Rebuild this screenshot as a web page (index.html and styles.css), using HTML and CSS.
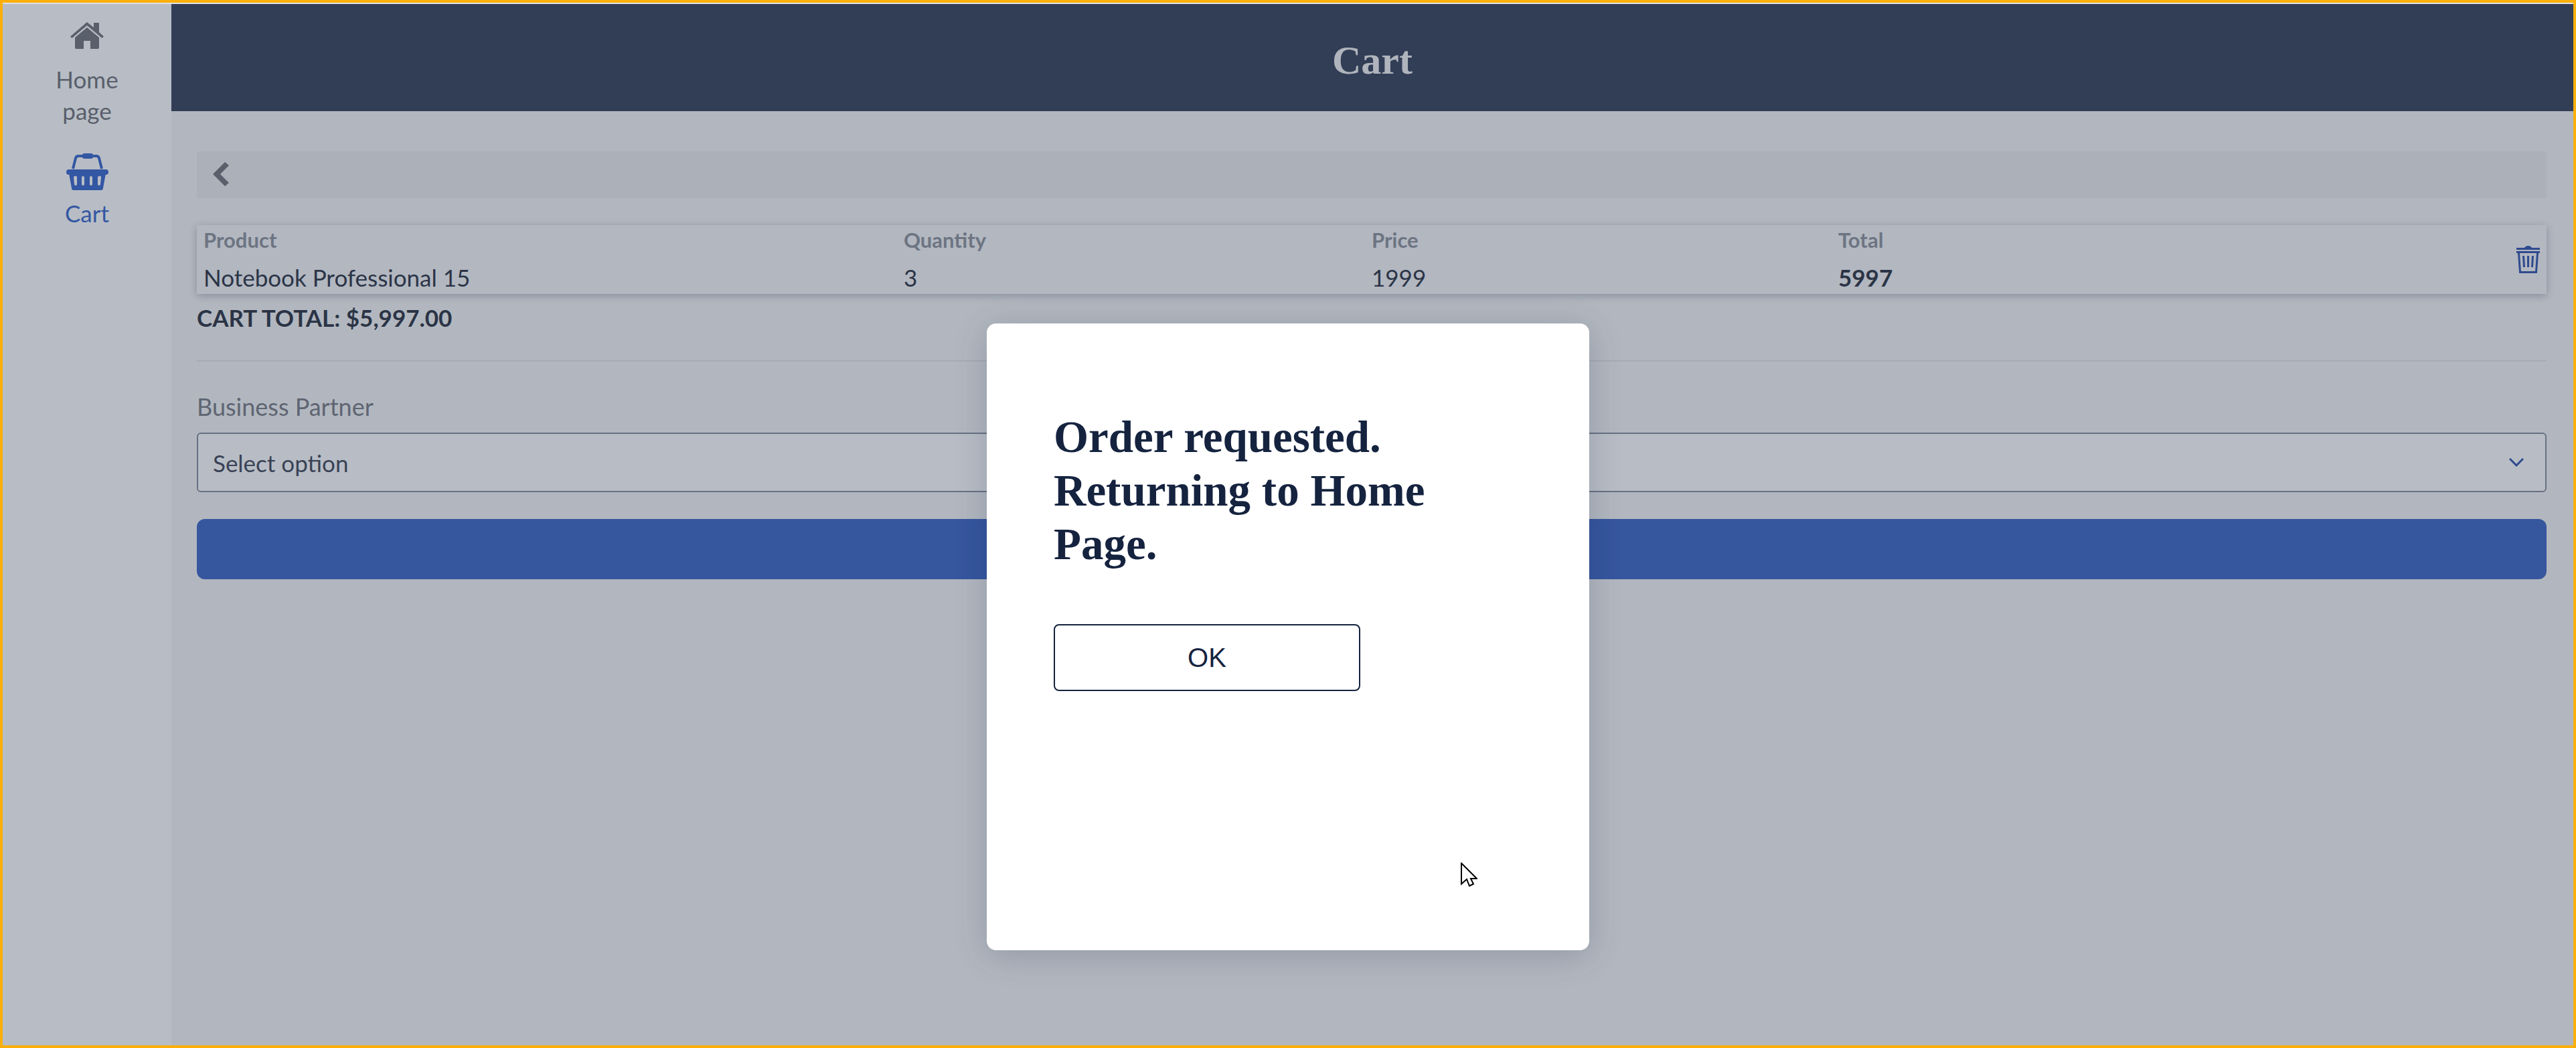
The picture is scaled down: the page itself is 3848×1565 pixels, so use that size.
FILE: index.html
```html
<!DOCTYPE html>
<html>
<head>
  <title>Cart</title>
  <meta charset="UTF-8">
  <link rel="stylesheet" href="styles.css">
</head>
<body>
  <div class="frame">
    <div class="sidebar">
      <div class="navItem navHome">
        <svg class="homeIcon" viewBox="0 0 50 40"><path d="M25 0L35 8V1H43V15L50 21.5L47.5 24L25 5L2.5 24L0 21.5Z"/><path d="M25 8L43 23V38a2 2 0 0 1-2 2H30V28H20V40H9a2 2 0 0 1-2-2V23Z"/></svg>
        <div class="navLabel">Home<br>page</div>
      </div>
      <div class="navItem navCart">
        <svg class="basketIcon" viewBox="0 0 63 55"><path class="handle" d="M10 23L14 7Q15 4 18 4H45Q48 4 49 7L53 23"/><rect x="24" y="0" width="16" height="8" rx="3"/><rect x="0" y="24" width="63" height="8" rx="4"/><path fill-rule="evenodd" d="M4 30H59L55 52a3 3 0 0 1-3 3H11a3 3 0 0 1-3-3ZM13 34a2 2 0 0 0-2 2L12 46a2 2 0 0 0 4 0L16 36a2 2 0 0 0-3-2ZM25 34a2 2 0 0 0-2 2V46a2 2 0 0 0 4 0V36a2 2 0 0 0-2-2ZM37 34a2 2 0 0 0-2 2V46a2 2 0 0 0 4 0V36a2 2 0 0 0-2-2ZM49 34a2 2 0 0 0-2 2L47 46a2 2 0 0 0 4 0L52 36a2 2 0 0 0-3-2Z"/></svg>
        <div class="navLabel">Cart</div>
      </div>
    </div>
    <div class="main">
      <div class="pageHeader">Cart</div>
      <div class="content">
        <div class="backBar">
          <svg class="backIcon" viewBox="0 0 24 36"><path d="M18 0L24 5L11 18L24 31L18 36L0 18Z"/></svg>
        </div>
        <div class="cartCard">
          <div class="cell head">Product</div>
          <div class="cell head">Quantity</div>
          <div class="cell head">Price</div>
          <div class="cell head">Total</div>
          <div class="trashCell">
            <svg class="trashIcon" viewBox="0 0 35 41"><path d="M12 3Q14 0 17.500 0T23 3Z"/><rect x="0" y="3" width="35" height="3"/><rect x="0" y="8" width="35" height="3"/><path class="trashLine" d="M3.500 11L5.500 39.500H29.500L31.500 11"/><path class="trashLine" d="M10.500 15L11.500 32M17.500 15V32M24.500 15L23.500 32"/></svg>
          </div>
          <div class="cell">Notebook Professional 15</div>
          <div class="cell">3</div>
          <div class="cell">1999</div>
          <div class="cell strong">5997</div>
        </div>
        <div class="cartTotal">CART TOTAL: $5,997.00</div>
        <div class="divider"></div>
        <div class="fieldLabel">Business Partner</div>
        <div class="selectBox">
          <span>Select option</span>
          <svg class="selectArrow" viewBox="0 0 22 13"><path d="M1 1L11 11L21 1"/></svg>
        </div>
        <div class="submitBar"></div>
      </div>
    </div>
    <div class="topLine"></div>
    <div class="overlay">
      <div class="modal">
        <h2>Order requested. Returning to Home Page.</h2>
        <div class="okButton">OK</div>
        <svg class="cursor" viewBox="0 0 25 36"><path d="M1 1V32L9 25L13 35L19 32L15 24H24Z"/></svg>
      </div>
    </div>
  </div>
</body>
</html>
```

FILE: styles.css
```css
body {
  margin: 0;
  padding: 0;
  font-family: Lato, "Noto Sans", sans-serif;
  color: #353c4a;
}
.frame {
  position: relative;
  box-sizing: border-box;
  width: 3848px;
  height: 1565px;
  border: 4px solid #fcaf0b;
  display: flex;
  background: #f7f7f7;
  overflow: hidden;
}
.topLine {
  position: absolute;
  top: 0;
  left: 0;
  right: 0;
  height: 2px;
  background: #dfe1e6;
}
.sidebar {
  width: 252px;
  flex: none;
  padding-top: 29px;
  background: #fff;
  text-align: center;
  box-sizing: border-box;
}
.navItem {
  color: #78797e;
  font-size: 35px;
  line-height: 47px;
}
.navHome {
  margin-bottom: 40px;
}
.navCart {
  color: #436dce;
}
.homeIcon {
  display: block;
  width: 50px;
  height: 40px;
  margin: 0 auto 22px;
  fill: #78797e;
}
.basketIcon {
  display: block;
  width: 63px;
  height: 55px;
  margin: 0 auto 11px;
  fill: #436dce;
}
.basketIcon .handle {
  fill: none;
  stroke: #436dce;
  stroke-width: 4;
}
.main {
  flex: 1;
  min-width: 0;
}
.pageHeader {
  box-sizing: border-box;
  height: 160px;
  margin-top: 2px;
  padding-top: 9px;
  background: #404a61;
  color: #f4f4f4;
  font: bold 60px/150px "Liberation Serif", serif;
  text-align: center;
}
.content {
  padding: 60px 40px 0 38px;
}
.backBar {
  height: 70px;
  background: #eeeeee;
  display: flex;
  align-items: center;
  padding-left: 24px;
}
.backIcon {
  width: 24px;
  height: 36px;
  margin-bottom: 2px;
  fill: #78797e;
}
.cartCard {
  display: grid;
  grid-template-columns: 1046px 699px 697px 1fr auto;
  grid-template-rows: 50px 53px;
  margin-top: 40px;
  padding-left: 10px;
  background: #f7f7f8;
  box-shadow: 0 3px 12px rgba(21, 35, 63, 0.28);
}
.cell {
  font-size: 35px;
  line-height: 44px;
  padding-top: 6px;
}
.cell.head {
  font-size: 31px;
  font-weight: bold;
  line-height: 40px;
  padding-top: 2px;
  color: #94979f;
}
.cell.strong {
  font-weight: bold;
}
.trashCell {
  grid-row: 1 / 3;
  grid-column: 5;
  padding: 31px 10px 0 0;
}
.trashIcon {
  display: block;
  width: 35px;
  height: 41px;
  fill: #3b5bb1;
}
.trashLine {
  fill: none;
  stroke: #3b5bb1;
  stroke-width: 3;
}
.cartTotal {
  margin-top: 13px;
  font-size: 35px;
  font-weight: bold;
  line-height: 44px;
}
.divider {
  height: 2px;
  margin-top: 42px;
  background: #e4e5e8;
}
.fieldLabel {
  margin-top: 45px;
  font-size: 36px;
  line-height: 44px;
  color: #7f8189;
}
.selectBox {
  box-sizing: border-box;
  height: 89px;
  margin-top: 17px;
  padding: 0 32px 0 22px;
  display: flex;
  align-items: center;
  justify-content: space-between;
  background: #fff;
  border: 2px solid #8d93a0;
  border-radius: 6px;
  font-size: 35px;
  color: #4b5060;
}
.selectArrow {
  width: 22px;
  height: 13px;
  fill: none;
  stroke: #3b5bb1;
  stroke-width: 3;
}
.submitBar {
  height: 90px;
  margin-top: 40px;
  border-radius: 12px;
  background: #456cc8;
}
.overlay {
  position: absolute;
  top: 2px;
  left: 0;
  right: 0;
  bottom: 0;
  background: rgba(21, 35, 63, 0.3);
  display: flex;
  justify-content: center;
  align-items: flex-start;
}
.modal {
  position: relative;
  box-sizing: border-box;
  width: 900px;
  height: 936px;
  margin-top: 477px;
  padding: 129px 100px 0;
  background: #fff;
  border-radius: 14px;
  box-shadow: 0 8px 50px rgba(21, 35, 63, 0.2);
  color: #15233f;
}
.modal h2 {
  margin: 0;
  font: bold 67px/80px "Liberation Serif", serif;
}
.okButton {
  box-sizing: border-box;
  width: 458px;
  height: 100px;
  margin-top: 80px;
  border: 2px solid #15233f;
  border-radius: 8px;
  font: 40px/96px "Liberation Sans", sans-serif;
  text-align: center;
}
.cursor {
  position: absolute;
  left: 708px;
  top: 805px;
  width: 25px;
  height: 36px;
  fill: #fff;
  stroke: #000;
  stroke-width: 2;
}
```
